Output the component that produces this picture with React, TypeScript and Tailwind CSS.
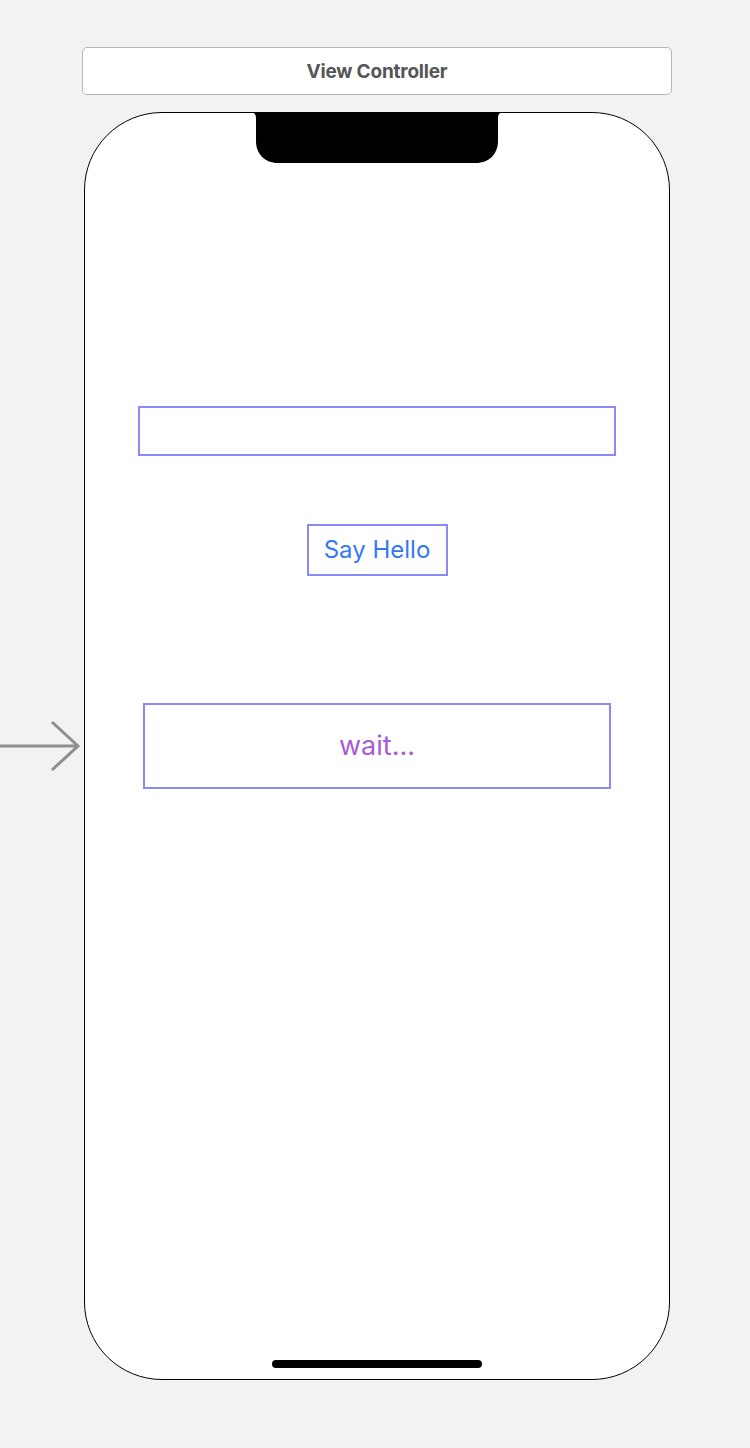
import React from "react";

export default function App() {
  return (
    <div
      className="relative w-[750px] h-[1448px] bg-[#f2f2f2] overflow-hidden"
      style={{ fontFamily: "Inter, 'Noto Sans', sans-serif" }}
    >
      <div className="flex flex-col pt-[47px]">
        <div className="ml-[82px] w-[590px] h-[48px] rounded-[5px] border border-[#b8b8b8] bg-white flex items-center justify-center">
          <span className="text-[19px] font-bold text-[#555555] tracking-[-0.2px] leading-none">View Controller</span>
        </div>

        <div className="ml-[84px] mt-[17px] w-[586px] h-[1268px] rounded-[78px] border-[1.5px] border-black bg-white flex flex-col items-center">
          <svg width="254" height="52" viewBox="0 0 254 52" className="-mt-[1.5px] block">
            <path
              d="M0 0 H254 C249.5 0 248 2 248 7 V29 C248 42 239 51 226 51 H28 C15 51 6 42 6 29 V7 C6 2 4.5 0 0 0 Z"
              fill="#000"
            />
          </svg>

          <div className="mt-[242px] w-[478px] h-[50px] border-2 border-[#8a8af6]" />

          <div className="mt-[68px] w-[141px] h-[52px] border-2 border-[#8a8af6] flex items-center justify-center">
            <span className="text-[24px] text-[#3478f6] leading-none">Say Hello</span>
          </div>

          <div className="mt-[127px] w-[468px] h-[86px] border-2 border-[#8a8af6] flex items-center justify-center">
            <span className="text-[27px] text-[#a45bd9] leading-none">wait...</span>
          </div>

          <div className="flex-1" />
          <div className="mb-[11px] w-[210px] h-[8px] rounded-full bg-black" />
        </div>
      </div>

      <svg className="absolute left-0 top-[719px]" width="82" height="54" viewBox="0 0 82 54">
        <path d="M0 27 H78 M52 3 L78 27 L52 51" stroke="#8e8e8e" strokeWidth="3" fill="none" />
      </svg>
    </div>
  );
}
